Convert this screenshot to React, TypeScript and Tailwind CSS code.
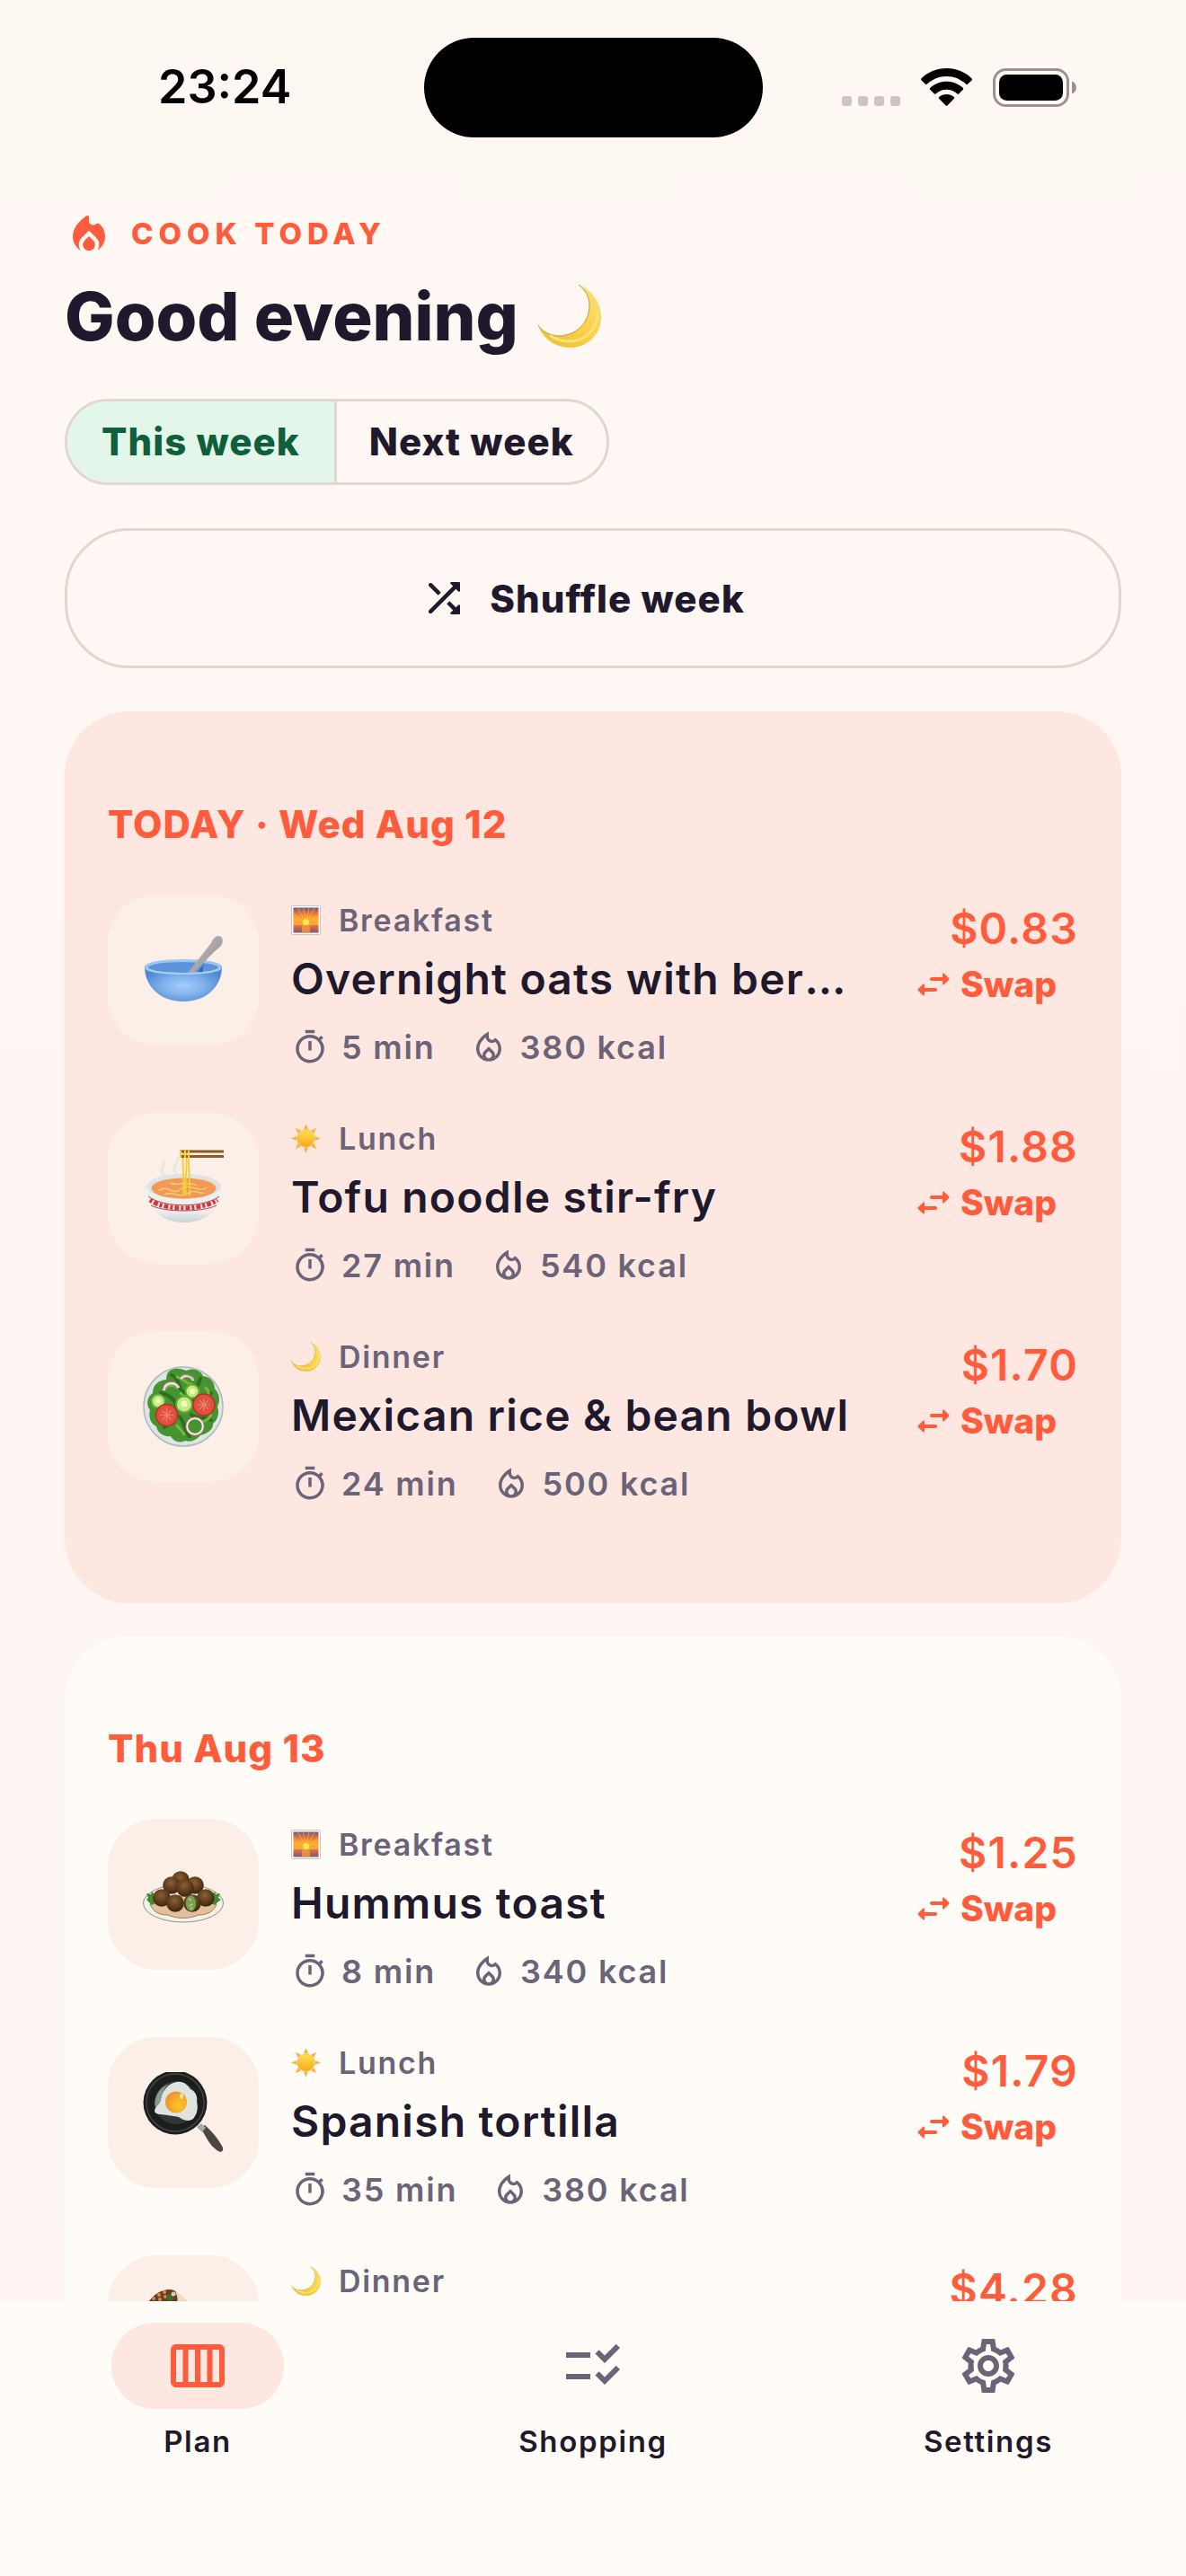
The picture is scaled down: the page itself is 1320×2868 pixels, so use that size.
import {
  MdOutlineCalendarViewWeek,
  MdOutlineChecklistRtl,
  MdOutlineLocalFireDepartment,
  MdOutlineSettings,
  MdOutlineTimer,
} from "react-icons/md";

/* ---------- status bar glyphs ---------- */

const SignalDots = () => (
  <svg viewBox="0 0 65 43" className="h-[43px] w-[65px]" fill="#cdc5c1" aria-hidden="true">
    <rect x="0" y="31" width="11" height="11" rx="3" />
    <rect x="18" y="31" width="11" height="11" rx="3" />
    <rect x="36" y="31" width="11" height="11" rx="3" />
    <rect x="54" y="31" width="11" height="11" rx="3" />
  </svg>
);

const Wifi = () => (
  <svg viewBox="0 0 57 43" className="h-[43px] w-[57px]" fill="#000" aria-hidden="true">
    <path d="M28.5 0C17.5 0 7.6 4.300 .4 11.400c-.5.500-.5 1.300 0 1.800l4.600 4.600c.5.500 1.200.500 1.700 0C12.300 12.400 20 9 28.500 9s16.200 3.400 21.800 8.800c.5.500 1.200.500 1.700 0l4.600-4.600c.5-.500.5-1.300 0-1.800C49.400 4.300 39.500 0 28.500 0z" />
    <path d="M28.500 14.800c-7.200 0-13.600 2.700-18.300 7.200-.5.500-.5 1.300 0 1.800l4.700 4.600c.5.400 1.200.500 1.600.1 3.200-2.900 7.400-4.700 12-4.700s8.800 1.800 12 4.700c.5.400 1.200.400 1.600-.1l4.700-4.600c.5-.500.5-1.300 0-1.800-4.700-4.500-11.100-7.200-18.300-7.200z" />
    <path d="M28.500 29c-3.200 0-6.100 1.200-8.300 3.100-.5.500-.5 1.200-.1 1.700l7.500 7.700c.5.500 1.300.500 1.800 0l7.500-7.700c.5-.5.400-1.200-.1-1.700-2.200-1.900-5.100-3.100-8.300-3.100z" />
  </svg>
);

const Battery = () => (
  <svg viewBox="0 0 93 43" className="h-[43px] w-[93px]" aria-hidden="true">
    <rect x="1.500" y="1.500" width="82" height="40" rx="13" fill="none" stroke="#99938f" strokeWidth="3" />
    <rect x="7" y="7" width="71" height="29" rx="8.500" fill="#000" />
    <path d="M88 14.500c3 1 5 3.900 5 7s-2 6-5 7z" fill="#99938f" />
  </svg>
);

/* ---------- rounded material icons missing from react-icons ---------- */

const FireIcon = () => (
  <svg viewBox="0 0 24 24" className="size-[54px]" fill="currentColor" aria-hidden="true">
    <path d="m12 12.900-2.130 2.090c-.56.560-.87 1.290-.87 2.070C9 18.680 10.350 20 12 20s3-1.320 3-2.940c0-.78-.31-1.520-.87-2.070L12 12.900z" />
    <path d="M15.950 6.610c-.16.090-.28.180-.4.260C14.150 7.900 12 7.060 12 5.300V3.500c0-.78-.55-1.050-1.110-.68C8.700 4.300 4 7.860 4 13c0 2.920 1.560 5.470 3.890 6.860-.56-.79-.89-1.760-.89-2.800 0-1.320.520-2.560 1.470-3.500L12 10.100l3.530 3.470c.95.930 1.470 2.170 1.470 3.500 0 1.020-.31 1.960-.85 2.750 1.890-1.150 3.290-3.060 3.710-5.300.55-2.970-.57-5.800-2.740-7.700-.35-.32-.79-.41-1.170-.21z" />
  </svg>
);

const ShuffleIcon = () => (
  <svg viewBox="0 0 24 24" className="size-[54px]" fill="currentColor" aria-hidden="true">
    <path d="M10.590 9.170 6.120 4.700c-.39-.39-1.020-.39-1.410 0-.39.390-.39 1.020 0 1.410l4.460 4.460 1.420-1.400zm4.760-4.320 1.190 1.190L4.700 17.880c-.39.390-.39 1.020 0 1.410.390.390 1.020.390 1.410 0L17.960 7.460l1.190 1.190c.31.310.850.090.850-.36V4.500c0-.28-.22-.5-.5-.5h-3.790c-.45 0-.67.540-.36.850zm-.52 8.560-1.410 1.410 3.130 3.130-1.200 1.200c-.31.310-.09.850.360.850h3.790c.28 0 .5-.22.5-.5v-3.790c0-.45-.54-.67-.85-.35l-1.190 1.190-3.130-3.140z" />
  </svg>
);

const SwapIcon = () => (
  <svg viewBox="0 0 24 24" className="size-12" fill="currentColor" aria-hidden="true">
    <path d="m6.140 11.860-2.780 2.790c-.19.200-.19.510 0 .71l2.780 2.790c.31.320.850.090.850-.35V16H13c.55 0 1-.45 1-1s-.45-1-1-1H6.990v-1.790c0-.45-.54-.67-.85-.35zm14.510-3.210-2.780-2.790c-.31-.32-.85-.09-.85.350V8H11c-.55 0-1 .45-1 1s.45 1 1 1h6.010v1.790c0 .45.540.67.850.35l2.780-2.790c.2-.19.200-.51.010-.7z" />
  </svg>
);

/* ---------- meal slot pictures ---------- */

const Moon = ({ className }: { className: string }) => (
  <svg viewBox="0 0 70 70" className={className} aria-hidden="true">
    <defs>
      <linearGradient id="moon" x1="0.9" y1="0.1" x2="0.3" y2="1">
        <stop offset="0" stopColor="#f7dd73" />
        <stop offset="0.55" stopColor="#fad247" />
        <stop offset="1" stopColor="#eec23c" />
      </linearGradient>
    </defs>
    <path d="M45 0c15 6 25 20 25 36 0 19-15 34-34 34C19 70 5 60 0 45c5 8 14 12 24 12 19-1 33-15 33-34 0-9-4-17-12-23z" fill="url(#moon)" />
    <path d="M0 45c5 8 14 12 24 12 19-1 33-15 33-34 0-9-4-17-12-23" fill="none" stroke="#c99c39" strokeWidth="1" />
    <path d="M66 31c0 18-13 32-31 32-8 0-15-2-21-6" fill="none" stroke="#fbe27b" strokeWidth="3" strokeLinecap="round" />
  </svg>
);

const Sun = () => (
  <svg viewBox="0 0 66 66" className="size-[33px]" aria-hidden="true">
    <defs>
      <linearGradient id="sun" x1="0" y1="0" x2="0" y2="1">
        <stop offset="0" stopColor="#ffe04a" />
        <stop offset="1" stopColor="#f9a91d" />
      </linearGradient>
    </defs>
    <g fill="#f6b340">
      {[0, 45, 90, 135, 180, 225, 270, 315].map((angle) => (
        <path key={angle} d="M33 0l5 13h-10z" transform={`rotate(${angle} 33 33)`} />
      ))}
    </g>
    <circle cx="33" cy="33" r="19" fill="url(#sun)" stroke="#f3a72a" strokeWidth="1" />
  </svg>
);

const Sunrise = () => (
  <svg viewBox="0 0 66 66" className="size-[33px]" aria-hidden="true">
    <defs>
      <linearGradient id="sky" x1="0" y1="0" x2="0" y2="1">
        <stop offset="0" stopColor="#71587c" />
        <stop offset="0.35" stopColor="#e5753f" />
        <stop offset="0.6" stopColor="#fda52c" />
      </linearGradient>
      <linearGradient id="sea" x1="0" y1="0" x2="0" y2="1">
        <stop offset="0" stopColor="#e1793c" />
        <stop offset="1" stopColor="#8b5470" />
      </linearGradient>
    </defs>
    <rect x="1" y="1" width="64" height="64" rx="2" fill="#fff" stroke="#c5c5c5" strokeWidth="2" />
    <rect x="5" y="5" width="56" height="38" fill="url(#sky)" />
    <path d="M33 38L5 18M33 38L14 5M33 38L27 5M33 38L40 5M33 38L53 5M33 38L61 20M33 38L5 30M33 38L61 31" stroke="#ffc43c" strokeWidth="1.500" opacity="0.800" />
    <rect x="5" y="43" width="56" height="18" fill="url(#sea)" />
    <rect x="24" y="43" width="18" height="18" fill="#f9a234" opacity="0.700" />
    <circle cx="33" cy="37" r="7" fill="#ffe94d" />
  </svg>
);

/* ---------- dish pictures ---------- */

const Bowl = () => (
  <svg viewBox="0 0 90 90" className="size-[90px]" aria-hidden="true">
    <defs>
      <radialGradient id="bowl" cx="0.5" cy="0.55" r="0.55">
        <stop offset="0" stopColor="#a5cdfb" />
        <stop offset="0.5" stopColor="#7fb1ec" />
        <stop offset="1" stopColor="#4d89d0" />
      </radialGradient>
      <linearGradient id="spoon" x1="0" y1="0" x2="1" y2="1">
        <stop offset="0" stopColor="#c9c4c4" />
        <stop offset="1" stopColor="#8d898e" />
      </linearGradient>
    </defs>
    <path d="M2 41c0 22 17 39 43 39s43-17 43-39z" fill="url(#bowl)" />
    <ellipse cx="45" cy="41" rx="43" ry="8" fill="#9cc5f4" />
    <ellipse cx="45" cy="42" rx="39" ry="6" fill="#5c93d9" />
    <path d="M61 47l7-9-2 10z" fill="#356ab0" />
    <path d="M50 48l26-33c2-5 5-8 8-8 4 0 6 4 4 9-2 4-6 6-9 9L57 48z" fill="url(#spoon)" />
    <path d="M3 43c9 8 75 8 84 0" fill="none" stroke="#a6cdf8" strokeWidth="2" />
  </svg>
);

const Noodles = () => (
  <svg viewBox="0 0 90 90" className="size-[90px]" aria-hidden="true">
    <defs>
      <linearGradient id="china" x1="0" y1="0" x2="0" y2="1">
        <stop offset="0" stopColor="#f0f1f1" />
        <stop offset="0.7" stopColor="#eceded" />
        <stop offset="1" stopColor="#c9d0d4" />
      </linearGradient>
    </defs>
    <path d="M24 32c-8-8 2-12-1-18M37 30c-6-8 3-14 2-20" fill="none" stroke="#e6e2dd" strokeWidth="3" opacity="0.700" />
    <path d="M4 43c0 24 16 40 42 40s41-16 41-40z" fill="url(#china)" />
    <ellipse cx="45.500" cy="43" rx="41.500" ry="14" fill="#dfe3e4" />
    <ellipse cx="45.500" cy="45" rx="36" ry="11.500" fill="#f19a55" />
    <path d="M18 48c8-9 15 6 24-2s20 5 30-2M24 52c10-5 16 5 25-1s14 1 19-1M30 39c8 4 20-3 30 3" fill="none" stroke="#f8cc71" strokeWidth="1.500" />
    <path d="M45 5c-2 16 2 30 0 48M48 5c2 18-2 31 0 48M51 5c-1 18 2 30 1 48" fill="none" stroke="#f5cf3b" strokeWidth="2" />
    <path d="M6 54c17 13 62 13 79 0M9 64c16 8 57 8 73 0" fill="none" stroke="#cc3b3e" strokeWidth="1" />
    <path d="M8 58c16 12 57 12 75 0" fill="none" stroke="#cc3b3e" strokeWidth="5" strokeDasharray="3 2 5 2" />
    <path d="M41 4h49M41 9.500h49" stroke="#8c5a25" strokeWidth="3" />
    <path d="M42 3v8M47 3v8M51 3v8" stroke="#f5cf3b" strokeWidth="2" />
  </svg>
);

const Salad = () => (
  <svg viewBox="0 0 90 90" className="size-[90px]" aria-hidden="true">
    <circle cx="45" cy="45" r="44" fill="#dfe5e5" stroke="#aebabb" strokeWidth="1.500" />
    <path d="M30 5c6-4 14-2 18 0 8-4 17 0 19 6 9 1 13 8 13 14 6 6 6 14 3 20 3 9-1 16-5 19 1 8-9 12-14 13-5 6-11 8-17 6-8 4-14-1-16-5-8 1-15-4-16-11-7-3-9-12-7-18-5-7-3-15 3-19 0-9 6-14 15-15 0-4 1-8 4-10z" fill="#479330" />
    <path d="M32 10c10 4 6 14 14 20M64 14c-2 10-10 12-12 22M20 30c10 2 16 8 18 16M76 30c-6 6-14 4-22 10M40 56c8 6 4 14 12 22M76 60c-8-4-14 0-22-6M24 68c8-6 10-6 12-18" fill="none" stroke="#2b701f" strokeWidth="4" strokeLinecap="round" />
    <path d="M38 12c8 2 10 8 16 8M24 26c4-6 10-6 14-2M70 24c4 4 4 8 2 12M66 62c4-2 8-2 10-8M38 66c2 4 6 6 8 10M42 30c4 4 8 6 12 4" fill="none" stroke="#74b843" strokeWidth="3" strokeLinecap="round" />
    <path d="M23 27c1-10 14-10 17-3M42 14c4-6 13-3 14 2" fill="none" stroke="#f2dfe2" strokeWidth="3" />
    <path d="M22 26c1-11 15-11 18-4M41 13c5-6 14-3 15 2" fill="none" stroke="#c35b81" strokeWidth="1" />
    <g fill="#c5eb80" stroke="#62a836" strokeWidth="2">
      <circle cx="17" cy="39" r="7.500" />
      <circle cx="55" cy="28" r="7.500" />
      <circle cx="46" cy="42.500" r="9" />
    </g>
    <g fill="#f0f9c0">
      <circle cx="17" cy="39" r="3" />
      <circle cx="55" cy="28" r="3" />
      <circle cx="46" cy="42" r="3.500" />
    </g>
    <g fill="#e05040" stroke="#b93027" strokeWidth="1.500">
      <circle cx="26.500" cy="54.500" r="12" />
      <circle cx="68" cy="43" r="12" />
    </g>
    <path d="M26.500 47v15M19 54.500h15M21.500 49.500l10 10M31.500 49.500l-10 10M68 36v14M61 43h14M63 38l10 10M73 38L63 48" stroke="#ee8468" strokeWidth="1.200" />
    <circle cx="58" cy="67" r="9" fill="none" stroke="#f4e6e9" strokeWidth="2.500" />
    <circle cx="58" cy="67" r="10.300" fill="none" stroke="#c35b81" strokeWidth="0.800" />
  </svg>
);

const falafelBalls = [
  [42, 29],
  [32, 35],
  [58, 35],
  [47, 38],
  [21, 49],
  [70, 49],
  [36, 55],
  [55, 55],
];

const Falafel = () => (
  <svg viewBox="0 0 90 90" className="size-[90px]" aria-hidden="true">
    <defs>
      <radialGradient id="falafel" cx="0.45" cy="0.35" r="0.65">
        <stop offset="0" stopColor="#8a6034" />
        <stop offset="0.6" stopColor="#5f3c1c" />
        <stop offset="1" stopColor="#3a2410" />
      </radialGradient>
    </defs>
    <ellipse cx="45" cy="55" rx="44.500" ry="21" fill="#f3f2ea" stroke="#8e918a" strokeWidth="1" />
    <path d="M8 56c4 10 12 12 20 12 10 5 26 4 34 0 10 0 17-4 20-12l-10-9H16z" fill="#e3c09c" stroke="#9d7850" strokeWidth="1" />
    <path d="M4 44l5 1 1-3 4 4 2 8-6 3-3-3-3-3 2-2zM86 44l-5 1-1-3-4 4-2 8 6 3 3-3 4-3-3-2z" fill="#3f8c35" />
    {falafelBalls.map(([cx, cy]) => (
      <circle key={`${cx}-${cy}`} cx={cx} cy={cy} r="9.800" fill="url(#falafel)" />
    ))}
    <ellipse cx="53.500" cy="55" rx="6" ry="9" fill="#7aa04d" stroke="#4c5a25" strokeWidth="1" />
    <path d="M51 50l3 2M55 56l-3 2M53 61l2-1" stroke="#b3c987" strokeWidth="2" />
  </svg>
);

const Pan = () => (
  <svg viewBox="0 0 90 90" className="size-[90px]" aria-hidden="true">
    <defs>
      <radialGradient id="yolk" cx="0.65" cy="0.65" r="0.7">
        <stop offset="0" stopColor="#ffc928" />
        <stop offset="1" stopColor="#f0902c" />
      </radialGradient>
    </defs>
    <path d="M64 62l5-3c7 6 15 15 20 25 1 4-2 6-5 4-7-4-12-12-15-18z" fill="#4b4544" />
    <path d="M60 61l5-4 5 5-4 5z" fill="#a9a9a7" />
    <circle cx="36" cy="34" r="35.500" fill="#1c1e1e" />
    <circle cx="36" cy="34" r="32" fill="none" stroke="#424544" strokeWidth="1.500" />
    <circle cx="37" cy="34" r="24" fill="#343737" />
    <path d="M38 11c8-1 12 4 15 8 6 3 8 8 7 14 2 8 0 14-4 19-4 3-9 2-13 0-4-4-10-2-15-4-5-1-13 0-15-4 0-6 6-8 7-14 1-8 8-18 18-19z" fill="#dfe5de" />
    <path d="M14 30c2-9 8-14 15-17-7 6-8 13-9 18-1 4-4 6-6 8-1-3-1-6 0-9z" fill="#8e9594" />
    <circle cx="37" cy="33.500" r="12" fill="url(#yolk)" />
    <ellipse cx="43" cy="27" rx="2" ry="3" fill="#ffe9a0" />
  </svg>
);

const Burrito = () => (
  <svg viewBox="0 0 90 90" className="size-[90px] overflow-visible" aria-hidden="true">
    <path d="M36 0l12 11 38 50c5 10-8 24-20 22L8 34z" fill="#dfc398" />
    <path d="M5 16C9 6 20-1 30-1c8 0 10 6 8 14-4 14-22 28-32 24-6-4-4-14-1-21z" fill="#6b3c22" />
    <g fill="#d98a4f">
      <circle cx="12" cy="9" r="2" />
      <circle cx="18" cy="5" r="2" />
      <circle cx="24" cy="2" r="2" />
      <circle cx="19" cy="10" r="2" />
      <circle cx="25" cy="7" r="2" />
    </g>
    <circle cx="30" cy="8" r="4" fill="#3d6b2c" />
    <circle cx="34" cy="4" r="2.500" fill="#c9cdd0" />
    <path d="M36 0l12 11-8 2z" fill="#f0dcb8" />
  </svg>
);

/* ---------- data ---------- */

const slots = {
  Breakfast: <Sunrise />,
  Lunch: <Sun />,
  Dinner: <Moon className="size-[33px]" />,
};

type Meal = {
  slot: keyof typeof slots;
  name: string;
  minutes: number;
  kcal: number;
  price: string;
  picture: React.ReactNode;
};

const today: Meal[] = [
  { slot: "Breakfast", name: "Overnight oats with berries", minutes: 5, kcal: 380, price: "$0.83", picture: <Bowl /> },
  { slot: "Lunch", name: "Tofu noodle stir-fry", minutes: 27, kcal: 540, price: "$1.88", picture: <Noodles /> },
  { slot: "Dinner", name: "Mexican rice & bean bowl", minutes: 24, kcal: 500, price: "$1.70", picture: <Salad /> },
];

const tomorrow: Meal[] = [
  { slot: "Breakfast", name: "Hummus toast", minutes: 8, kcal: 340, price: "$1.25", picture: <Falafel /> },
  { slot: "Lunch", name: "Spanish tortilla", minutes: 35, kcal: 380, price: "$1.79", picture: <Pan /> },
  { slot: "Dinner", name: "Bean burrito", minutes: 30, kcal: 560, price: "$4.28", picture: <Burrito /> },
];

const tabs = [
  { label: "Plan", icon: MdOutlineCalendarViewWeek, active: true },
  { label: "Shopping", icon: MdOutlineChecklistRtl, active: false },
  { label: "Settings", icon: MdOutlineSettings, active: false },
];

/* ---------- page parts ---------- */

const StatusBar = () => (
  <div className="grid h-[194px] shrink-0 grid-cols-[1fr_377px_1fr] items-center text-black">
    <span className="pl-44 text-[52px] font-semibold">23:24</span>
    <div className="h-[111px] rounded-full bg-black" />
    <div className="flex justify-end gap-[23px] pr-[122px]">
      <SignalDots />
      <Wifi />
      <Battery />
    </div>
  </div>
);

const MealRow = ({ meal }: { meal: Meal }) => (
  <li className="flex items-start gap-9 pb-[35px]">
    <div className="flex size-[168px] shrink-0 items-center justify-center rounded-[54px] bg-[#fbefe7]">
      {meal.picture}
    </div>
    <div className="min-w-0 flex-1">
      <div className="flex h-14 items-center gap-5 text-[34px] font-semibold tracking-wider text-[#6b6479]">
        {slots[meal.slot]}
        {meal.slot}
      </div>
      <h3 className="truncate text-5xl leading-[76px] font-semibold tracking-wide">{meal.name}</h3>
      <div className="flex h-[76px] items-center gap-[38px] text-4xl font-semibold tracking-wider text-[#6b6479]">
        <span className="flex items-center gap-[14px]">
          <MdOutlineTimer className="size-[42px]" />
          {meal.minutes} min
        </span>
        <span className="flex items-center gap-[14px]">
          <MdOutlineLocalFireDepartment className="size-[42px]" />
          {meal.kcal} kcal
        </span>
      </div>
    </div>
    <div className="flex shrink-0 flex-col items-end text-[#ff5c3e]">
      <span className="text-5xl leading-[76px] font-semibold tracking-wide">{meal.price}</span>
      <button type="button" className="flex h-12 items-center gap-[6px] px-6 text-[39px] font-extrabold">
        <SwapIcon />
        Swap
      </button>
    </div>
  </li>
);

const DayCard = ({ title, meals, highlighted }: { title: string; meals: Meal[]; highlighted?: boolean }) => (
  <section className={`rounded-[72px] px-12 pt-24 pb-[60px] ${highlighted ? "bg-[#fee7e1]" : "bg-[#fffcf7]"}`}>
    <h2 className="mb-12 text-[42px] leading-[60px] font-extrabold tracking-wide text-[#ff5c3e]">{title}</h2>
    <ul>
      {meals.map((meal) => (
        <MealRow key={meal.name} meal={meal} />
      ))}
    </ul>
  </section>
);

const TabBar = () => (
  <nav className="grid shrink-0 grid-cols-3 bg-[#fffcf7] pt-6 pb-[126px]">
    {tabs.map(({ label, icon: Icon, active }) => (
      <a key={label} href={`#${label.toLowerCase()}`} className="flex flex-col items-center gap-3">
        <span
          className={`flex h-24 w-48 items-center justify-center rounded-full ${
            active ? "bg-[#fee7e1] text-[#ff5c3e]" : "text-[#6b6479]"
          }`}
        >
          <Icon className="size-[72px]" />
        </span>
        <span className="text-[33px] leading-[48px] font-semibold tracking-wider">{label}</span>
      </a>
    ))}
  </nav>
);

export default function App() {
  return (
    <div className="flex h-screen flex-col bg-gradient-to-b from-[#fff8f3] to-[#fff4f3] font-['Inter',sans-serif] text-[#1f192d]">
      <StatusBar />

      <main className="min-h-0 flex-1 overflow-y-auto px-[72px] pt-10 [scrollbar-width:none]">
        <div className="flex items-center gap-5 text-[#ff5c3e]">
          <FireIcon />
          <span className="text-[33px] font-extrabold tracking-[6px]">COOK TODAY</span>
        </div>
        <h1 className="mt-4 flex items-center gap-[22px] text-[74px] leading-[96px] font-extrabold">
          Good evening
          <Moon className="size-[70px]" />
        </h1>

        <div className="mt-11 inline-grid grid-cols-2 overflow-hidden rounded-full border-3 border-[#e2d7cd] text-[42px] leading-[90px] font-extrabold tracking-wide">
          <button type="button" aria-pressed="true" className="border-r-3 border-[#e2d7cd] bg-[#e2f6ea] px-9 text-[#0f5f3d]">
            This week
          </button>
          <button type="button" aria-pressed="false" className="px-9">
            Next week
          </button>
        </div>

        <button
          type="button"
          className="mt-12 flex h-[156px] w-full items-center justify-center gap-6 rounded-[72px] border-3 border-[#e2d7cd] pr-6 text-[42px] font-extrabold tracking-wide"
        >
          <ShuffleIcon />
          Shuffle week
        </button>

        <div className="mt-12 flex flex-col gap-9">
          <DayCard title="TODAY · Wed Aug 12" meals={today} highlighted />
          <DayCard title="Thu Aug 13" meals={tomorrow} />
        </div>
      </main>

      <TabBar />
    </div>
  );
}
